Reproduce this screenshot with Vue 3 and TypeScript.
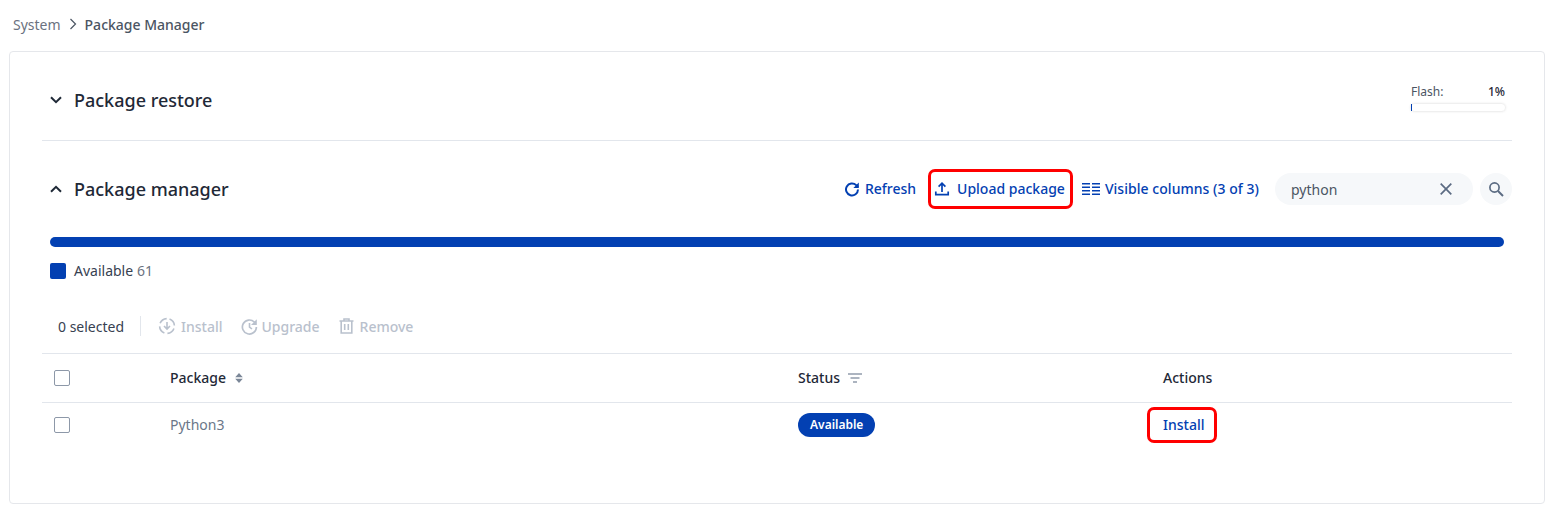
<script setup lang="ts">
import { ref } from 'vue'

const query = ref('python')
const available = 61
const flashUsed = 1
</script>

<template>
  <div class="page">
    <nav class="crumbs">
      <span class="crumb-parent">System</span>
      <svg class="crumb-sep" width="10" height="12" viewBox="0 0 10 12"><path d="M2.5 1l5 5-5 5" fill="none" stroke="#4b5563" stroke-width="1.2" /></svg>
      <span class="crumb-current">Package Manager</span>
    </nav>

    <div class="card">
      <section class="restore">
        <svg class="chevron" width="12" height="8" viewBox="0 0 12 8"><path d="M1 1.2L6 6.200l5-5" fill="none" stroke="#1f2937" stroke-width="2" /></svg>
        <h2 class="title">Package restore</h2>
        <div class="flash">
          <div class="flash-row">
            <span class="flash-label">Flash:</span>
            <span class="flash-value">{{ flashUsed }}%</span>
          </div>
          <div class="flash-track"><div class="flash-fill"></div></div>
        </div>
      </section>

      <section class="manager">
        <div class="manager-head">
          <svg class="chevron" width="12" height="8" viewBox="0 0 12 8"><path d="M1 6.800L6 1.800l5 5" fill="none" stroke="#1f2937" stroke-width="2" /></svg>
          <h2 class="title">Package manager</h2>
          <div class="tools">
            <button class="tool refresh">
              <svg width="16" height="16" viewBox="0 0 16 16"><path d="M14 8.500a6 6 0 1 1-1.800-4.400L14 6" fill="none" stroke="#0340b2" stroke-width="2" /><path d="M14.800 1.600V7H9.400z" fill="#0340b2" /></svg>
              Refresh
            </button>
            <button class="tool upload">
              <svg width="16" height="16" viewBox="0 0 16 16"><path d="M8 11V2.500M4.600 5.600L8 2.200l3.400 3.400M1.800 10.500v3.200h12.400v-3.200" fill="none" stroke="#0340b2" stroke-width="1.700" /></svg>
              Upload package
            </button>
            <button class="tool columns">
              <svg width="18" height="12" viewBox="0 0 18 12"><path d="M0 .75h8M0 4.250h8M0 7.750h8M0 11.250h8M10 .75h8M10 4.250h8M10 7.750h8M10 11.250h8" stroke="#0340b2" stroke-width="1.300" /></svg>
              Visible columns (3 of 3)
            </button>
          </div>
          <div class="search">
            <input v-model="query" class="search-input" type="text" />
            <svg width="12" height="12" viewBox="0 0 12 12"><path d="M.7.7l10.600 10.600M11.300.7L.7 11.300" stroke="#5b6b82" stroke-width="1.700" /></svg>
          </div>
          <button class="search-btn">
            <svg width="16" height="16" viewBox="0 0 16 16"><circle cx="6.500" cy="6.500" r="4.600" fill="none" stroke="#5b6b82" stroke-width="1.700" /><path d="M10 10l5 5" stroke="#5b6b82" stroke-width="2" /></svg>
          </button>
        </div>

        <div class="usage-bar"></div>
        <div class="legend">
          <span class="swatch"></span>
          <span class="legend-name">Available</span>
          <span class="legend-count">{{ available }}</span>
        </div>

        <div class="bulk">
          <span class="selected">0 selected</span>
          <span class="bulk-sep"></span>
          <span class="bulk-action action-install">
            <svg width="18" height="18" viewBox="0 0 18 18"><circle cx="9" cy="9" r="7.400" fill="none" stroke="#b9c1cd" stroke-width="1.600" stroke-dasharray="8.500 3.100" transform="rotate(-70 9 9)" /><path d="M9 5v6.800M6 9l3 3 3-3" fill="none" stroke="#b9c1cd" stroke-width="1.600" /></svg>
            Install
          </span>
          <span class="bulk-action action-upgrade">
            <svg width="17" height="17" viewBox="0 0 17 17"><path d="M15.400 9a7 7 0 1 1-2.100-5l1.500 1.600" fill="none" stroke="#b9c1cd" stroke-width="1.700" /><path d="M15.800 1.200V7H10z" fill="#b9c1cd" /><path d="M8.500 5v4l2.500 2" fill="none" stroke="#b9c1cd" stroke-width="1.600" /></svg>
            Upgrade
          </span>
          <span class="bulk-action action-remove">
            <svg width="15" height="16" viewBox="0 0 15 16"><path d="M.5 3h14M5 3V1h5v2M2.200 3v12h10.600V3M5.700 6v6M9.300 6v6" fill="none" stroke="#b9c1cd" stroke-width="1.600" /></svg>
            Remove
          </span>
        </div>

        <div class="table">
          <div class="row head-row">
            <span class="check"></span>
            <span class="col-name">
              Package
              <svg width="8" height="10" viewBox="0 0 8 10"><path d="M4 0l3.800 4.200H.2zM4 10L.2 5.800h7.600z" fill="#7b8798" /></svg>
            </span>
            <span class="col-status">
              Status
              <svg width="14" height="10" viewBox="0 0 14 10"><path d="M0 1h14M2.500 5h9M5 9h4" stroke="#5b6b82" stroke-width="1.200" /></svg>
            </span>
            <span class="col-actions">Actions</span>
          </div>
          <div class="row body-row">
            <span class="check"></span>
            <span class="cell-name">Python3</span>
            <span class="cell-status"><span class="badge">Available</span></span>
            <span class="cell-actions"><button class="install">Install</button></span>
          </div>
        </div>
      </section>
    </div>
  </div>
</template>

<style scoped>
.page {
  width: 1556px;
  height: 528px;
  box-sizing: border-box;
  padding: 14px 11px 24px 9px;
  font-family: "Noto Sans", sans-serif;
  font-size: 14px;
  color: #1f2937;
  background: #fff;
  overflow: hidden;
}

.crumbs {
  display: flex;
  align-items: center;
  height: 20px;
  padding-left: 4px;
  margin-bottom: 17px;
  font-size: 14px;
}

.crumb-parent {
  color: #6b7280;
}

.crumb-sep {
  margin: 0 7px 0 7px;
}

.crumb-current {
  color: #4b5563;
  font-weight: 500;
}

.card {
  height: 453px;
  box-sizing: border-box;
  padding: 0 32px;
  border: 1px solid #e5e7eb;
  border-radius: 4px;
}

.restore {
  display: flex;
  align-items: center;
  height: 89px;
  box-sizing: border-box;
  padding-top: 8px;
  padding-left: 8px;
  border-bottom: 1px solid #e2e6ec;
}

.chevron {
  margin-right: 12px;
}

.title {
  margin: 0;
  font-size: 18px;
  font-weight: 500;
  color: #1f2937;
  line-height: 24px;
}

.flash {
  width: 94px;
  margin-left: auto;
  margin-right: 7px;
  margin-top: -6px;
}

.flash-row {
  display: flex;
  justify-content: space-between;
  font-size: 12px;
  line-height: 16px;
}

.flash-label {
  color: #4b5563;
}

.flash-value {
  font-weight: 500;
  color: #1f2937;
}

.flash-track {
  height: 7px;
  margin-top: 4px;
  border-radius: 4px;
  background: #fff;
  box-shadow: 0 0 3px rgba(0, 0, 0, 0.18);
}

.flash-fill {
  width: 1px;
  height: 100%;
  background: #0340b2;
}

.manager-head {
  display: flex;
  align-items: center;
  height: 32px;
  margin-top: 32px;
  padding-left: 8px;
}

.tools {
  display: flex;
  align-items: center;
  margin-left: auto;
}

.tool,
.install {
  border: 0;
  background: none;
  padding: 0;
  font: inherit;
  font-weight: 500;
  color: #0340b2;
}

.tool {
  display: flex;
  align-items: center;
  height: 40px;
  box-sizing: border-box;
  padding-bottom: 2px;
}

.tool svg {
  margin-top: 2px;
}

.refresh {
  gap: 5px;
  margin-right: 12px;
}

.upload {
  gap: 7px;
  padding: 0 5px 2px 3px;
  border: 3px solid #f00;
  border-radius: 7px;
  margin-right: 9px;
}

.columns {
  gap: 5px;
  letter-spacing: 0.04px;
}

.search {
  display: flex;
  align-items: center;
  width: 198px;
  height: 32px;
  box-sizing: border-box;
  margin-left: 16px;
  padding: 0 21px 0 16px;
  border-radius: 16px;
  background: #f6f8fa;
}

.search-input {
  flex: 1;
  min-width: 0;
  border: 0;
  outline: 0;
  padding: 0;
  background: transparent;
  font: inherit;
  color: #4b5563;
}

.search-btn {
  display: flex;
  align-items: center;
  justify-content: center;
  width: 32px;
  height: 32px;
  margin-left: 7px;
  padding: 0;
  border: 0;
  border-radius: 50%;
  background: #f6f8fa;
}

.usage-bar {
  height: 10px;
  margin: 32px 8px 0;
  border-radius: 5px;
  background: #0340b2;
}

.legend {
  display: flex;
  align-items: center;
  height: 20px;
  margin: 14px 8px 0;
  color: #374151;
}

.swatch {
  width: 16px;
  height: 16px;
  margin-right: 8px;
  border-radius: 2px;
  background: #0340b2;
}

.legend-name,
.legend-count {
  padding-bottom: 2px;
}

.legend-count {
  margin-left: 4px;
  color: #6b7280;
}

.bulk {
  display: flex;
  align-items: center;
  height: 20px;
  margin-top: 35px;
  padding-left: 16px;
}

.selected {
  color: #374151;
}

.bulk-sep {
  width: 1px;
  height: 20px;
  margin: 0 17px 0 16px;
  background: #e2e6ec;
}

.bulk-action {
  display: flex;
  align-items: center;
  margin-right: 18px;
  font-weight: 500;
  color: #b9c1cd;
}

.action-install {
  gap: 5px;
}

.action-upgrade {
  gap: 4px;
  margin-right: 19px;
}

.action-remove {
  gap: 6px;
}

.table {
  margin-top: 17px;
  border-top: 1px solid #e2e6ec;
}

.row {
  display: grid;
  grid-template-columns: 128px 628px 365px 1fr;
  align-items: center;
}

.head-row {
  height: 48px;
  border-bottom: 1px solid #e2e6ec;
  font-weight: 500;
  color: #1f2937;
}

.body-row {
  height: 44px;
}

.check {
  width: 16px;
  height: 16px;
  box-sizing: border-box;
  margin-left: 12px;
  border: 1px solid #8d98a8;
  border-radius: 2px;
  background: #fff;
}

.col-name,
.col-status {
  display: flex;
  align-items: center;
  padding-bottom: 2px;
}

.col-name svg,
.col-status svg {
  margin-top: 2px;
}

.col-actions,
.cell-name {
  padding-bottom: 2px;
}

.col-name {
  gap: 9px;
}

.col-status {
  gap: 8px;
}

.cell-name {
  color: #6b7789;
}

.badge {
  display: inline-block;
  height: 24px;
  padding: 0 12px;
  border-radius: 12px;
  background: #0340b2;
  color: #fff;
  font-size: 12px;
  font-weight: 600;
  line-height: 24px;
}

.cell-status {
  display: flex;
}

.cell-actions {
  display: flex;
}

.install {
  box-sizing: border-box;
  height: 36px;
  margin-left: -16px;
  padding: 0 10px 2px 13px;
  border: 3px solid #f00;
  border-radius: 7px;
}
</style>
